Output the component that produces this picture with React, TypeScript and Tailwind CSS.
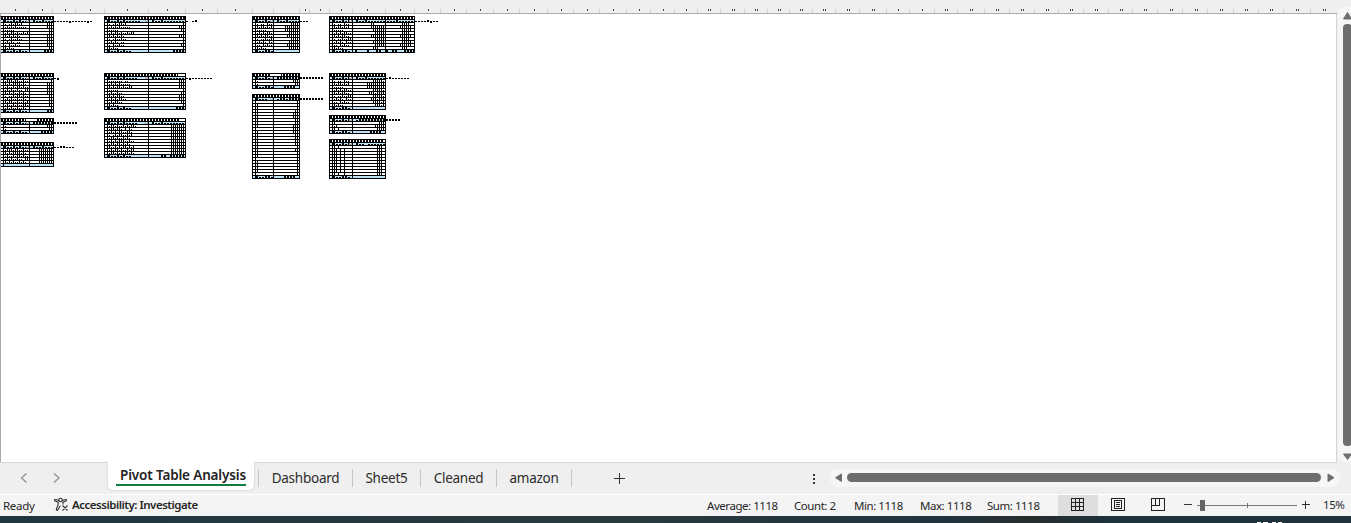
import React from 'react';

/*
 * Marks: "i" tall stroke, "." low dot on a 2px pitch;
 * "I" wide stroke, "_" wide dash, "o" wide stroke below the line on a 3px pitch.
 */
function Marks({ t, className = '' }: { t: string; className?: string }) {
  const wide = /[I_o]/.test(t);
  const pitch = wide ? 3 : 2;
  const w = wide ? 2 : 1;
  const d = t
    .split('')
    .map((c, i) => {
      if (c === ' ') return '';
      const tall = c === 'i' || c === 'I';
      return `M${i * pitch} ${tall ? 0 : 1}h${w}v${tall || c === 'o' ? 2 : 1}h${-w}z`;
    })
    .join('');
  return (
    <svg width={t.length * pitch} height={3} className={`block shrink-0 ${className}`} shapeRendering="crispEdges">
      <path d={d} fill="#000" />
    </svg>
  );
}

type Row = [string, string, string?];
type TableProps = {
  className?: string;
  width: string;
  label: string;
  mid?: string;
  title?: string;
  field?: string;
  value?: string;
  value2?: string;
  total: Row;
  rows: Row[];
  tail?: string;
};

function PivotTable({
  className = '',
  width,
  label,
  mid,
  title = 'w-full',
  field = 'I__I_I____',
  value = 'I__I______________________',
  value2 = '___I_________',
  total,
  rows,
  tail = '',
}: TableProps) {
  const stub = 'w-[3px] shrink-0 border-r border-black';
  const lab = `${label} shrink-0 overflow-hidden border-r border-black`;
  const band = 'flex h-[3px] overflow-hidden border-b border-black bg-[#bde4f6]';
  return (
    <div className={`relative flex shrink-0 flex-col border border-b-0 border-black bg-white ${width} ${className}`}>
      <div className="h-[3px] border-b border-black">
        <div
          className={`h-[2px] bg-[repeating-linear-gradient(90deg,#000_0px,#000_2px,#fff_2px,#fff_3px)] ${title}`}
        />
      </div>
      <div className={band}>
        <div className={stub} />
        <div className={`${lab} relative`}>
          <Marks t={field} />
          <div className="absolute top-0 right-0 h-[2px] w-[3px] bg-[#a6a6a6]">
            <div className="ml-px h-px w-px bg-white" />
          </div>
        </div>
        <div className={`overflow-hidden pl-[3px] ${mid ? `${mid} shrink-0 border-r border-black` : 'flex-1'}`}>
          <Marks t={value} />
        </div>
        {mid && (
          <div className="flex-1 overflow-hidden pl-px">
            <Marks t={value2} />
          </div>
        )}
      </div>
      {rows.map((r, i) => (
        <div key={i} className="flex h-[3px] border-b border-black">
          <div className={stub} />
          <div className={`${lab} pl-px`}>
            <Marks t={r[0]} />
          </div>
          <div className={`flex justify-end ${mid ? `${mid} shrink-0 border-r border-black` : 'flex-1'}`}>
            <Marks t={r[1]} />
          </div>
          {mid && (
            <div className="flex flex-1 justify-end">
              <Marks t={r[2] ?? ''} />
            </div>
          )}
        </div>
      ))}
      <div className={band}>
        <div className={stub} />
        <div className={lab}>
          <Marks t={total[0]} />
        </div>
        <div className={`flex justify-end ${mid ? `${mid} shrink-0 border-r border-black` : 'flex-1'}`}>
          <Marks t={total[1]} />
        </div>
        {mid && (
          <div className="flex flex-1 justify-end">
            <Marks t={total[2] ?? ''} />
          </div>
        )}
      </div>
      {tail && <Marks t={tail} className="absolute top-[3px] left-full ml-px" />}
    </div>
  );
}

const gt = 'I__I_I__';
const names = ['. .i.ii.i', '.i.i.i.....', '.....', '.i.ii.i..i.ii', 'i.i.i.i.', '. .i..i..', '.i.i. ..', '. i..i..', 'i.i..'];
const brands = ['. .. i..', 'i.ii.i.i', '.....', '.i.i.ii..i.', 'i.i.ii.. ', '. ..i..ii', '.i.i. i..', '.. i.i..', 'i.i..'];
const longs = ['.iii.ii..i..i', 'i.i.iiii.i.', '.i..i.ii.i..', '.i.i..i.. ii', 'i.i.i..i.i.', '. ..i.ii.i..', '.i.i..i..i.', 'i.ii..i..i.i', '.i..i.i..ii.', '.i.i..i..i.'];
const zip = (a: string[], b: string[], c: string[] = []): Row[] => a.map((s, i) => [s, b[i] ?? '', c[i] ?? '']);

const seps = [28, 52, 75, 104, 148, 185, 217, 252, 273, 299, 309, 329, 352, 385, 414, 440, 466, 493, 519, 547, 573, 599, 626, 650, 674, 697, 720, 744, 767, 789, 812, 835, 859, 886, 909, 934, 957, 984, 1009, 1034, 1058, 1083, 1108, 1132, 1157, 1182, 1207, 1233, 1258, 1283, 1310];
const ones = [15, 42, 65, 90, 127, 167, 202, 235, 305, 320, 341, 367, 400, 428, 454, 480, 507, 534, 561, 587, 613, 639, 663, 686, 898, 922];
const twos = [708, 732, 755, 778, 800, 823, 847, 872, 945, 970, 996, 1021, 1046, 1070, 1095, 1120, 1144, 1170, 1195, 1220, 1245, 1270, 1296, 1323];

function ColumnRuler() {
  return (
    <div className="h-[14px] w-[1337px] border-b border-[#ababab] bg-[#efefef]">
      <svg width="1337" height="13" className="block" shapeRendering="crispEdges">
        {seps.map((x) => (
          <g key={x}>
            <rect x={x} y="7" width="1" height="3" fill="#e2e2e2" />
            <rect x={x} y="10" width="1" height="3" fill="#cfcfcf" />
          </g>
        ))}
        {ones.map((x) => (
          <rect key={x} x={x} y="9" width="1" height="2" fill="#444" />
        ))}
        {twos.map((x) => (
          <path key={x} d={`M${x} 9h1v2h-1zM${x + 2} 9h1v2h-1z`} fill="#444" />
        ))}
      </svg>
    </div>
  );
}

function Sheet() {
  return (
    <div className="flex h-[449px] w-[1337px] items-start border-r border-b border-[#d6d6d6] bg-white pt-[2px]">
      <div className="-mt-[2px] h-[448px] w-px shrink-0 bg-[#ababab]" />
      <div className="-ml-px flex w-[104px] shrink-0 flex-col">
        <PivotTable width="w-[54px]" className="border-l-[#ababab]" label="w-[26px]" tail="_____o_____o_" total={[gt, 'III']} rows={zip(names, ['iii', 'iii', 'ii', 'ii', 'iii', 'iii', 'iii', 'iii', 'ii'])} />
        <PivotTable width="w-[54px]" className="mt-[20px] border-l-[#ababab]" label="w-[26px]" tail="_o" total={[gt, 'II']} rows={zip(longs, ['i', 'iii', 'iii', 'iii', 'iii', 'ii', 'ii', 'ii', 'ii', 'i'])} />
        <PivotTable width="w-[54px]" className="mt-[5px] border-l-[#ababab]" label="w-[26px]" title="w-full [mask-image:linear-gradient(90deg,#000_25px,transparent_25px,transparent_36px,#000_36px)]" value="IIIIIIIII" tail="IIIIIIII" total={[gt, 'IIII']} rows={zip(['.', '.'], ['iii', 'ii'])} />
        <PivotTable width="w-[54px]" className="mt-[8px] border-l-[#ababab]" label="w-[26px]" tail="__II___" total={['', '']} rows={zip(longs, ['iiiiiii', 'iiiiiii', 'iiiiiii', 'iiiiiii', 'iiiiiii']).slice(0, 5)} />
      </div>
      <div className="flex w-[148px] shrink-0 flex-col">
        <PivotTable width="w-[82px]" label="w-[41px]" field="I__I_I_____" tail="_ _I" total={[gt, 'IIII']} rows={zip(names, ['i', 'iii', 'ii', 'i', 'iii', 'i', 'i', 'ii', 'i'])} />
        <PivotTable width="w-[82px]" className="mt-[20px]" title="w-[73px]" label="w-[41px]" tail="_o_______" total={[gt, 'III']} rows={zip(['....... ..', '.i.i.i.....', 'i.i.ii.i..ii', '.....', '.i..i..', 'i.i.ii..', '.i.i.ii..', '.i.ii..', 'i.i..'], ['iii', 'iii', 'iii', 'i', 'ii', 'iii', 'iii', 'ii', 'i'])} />
        <PivotTable width="w-[82px]" className="mt-[8px]" title="w-[74px]" label="w-[41px]" total={[gt, 'II IIIII']} rows={zip(['.ii.i..i.i.ii.', '.ii.ii. i i.', '.i.i.ii..ii.', '. .i.ii..i.i', '.ii.i..i.i.', '.i.i.iii..i..', '.ii.ii.i.i.', 'i..i.i.ii.i.i', '.i.ii.i..i.ii', '.ii.i.i.ii.i.'], Array(10).fill('iiiiiii'))} />
      </div>
      <div className="flex w-[77px] shrink-0 flex-col">
        <PivotTable width="w-[48px]" label="w-[18px]" tail="___" total={['I__II_', '']} rows={zip(brands, ['iiii', 'iiiiiii', 'iiiiiii', 'iiiii', 'iiiiii', 'iiii', 'iiiii', 'iiiiii', 'iiiii'])} />
        <PivotTable width="w-[48px]" className="mt-[20px]" label="w-[18px]" title="w-full [mask-image:linear-gradient(90deg,#000_18px,transparent_18px,transparent_28px,#000_28px)]" value="IIIIIIII" tail="IIIIIIII" total={['I__II_', 'IIII ']} rows={zip(['.', '.'], ['iii', 'ii'])} />
        <PivotTable width="w-[48px]" className="mt-[5px]" label="w-[18px]" field="I___" value="_II_IIIII" tail="IIIIIIII" total={['I__II_', 'IIII ']} rows={Array.from({ length: 25 }, (_, i): Row => [i === 0 || i === 9 || i === 19 || i === 24 ? '' : 'i', i < 3 ? 'i' : i === 5 || i === 4 || (i > 7 && i < 11) ? 'iii' : i < 15 || i === 16 ? 'ii' : 'i'])} />
      </div>
      <div className="flex shrink-0 flex-col">
        <PivotTable width="w-[86px]" label="w-[20px]" mid="w-[33px]" tail="____Io__" total={['I__II_', 'I   I  II ', 'I II  IIII ']} rows={zip(brands, ['ii     ', 'iiiiiii', 'iiiiii', 'iiiii', 'iiiiiii', 'iiiii', 'iiiiii', 'iiiii', 'iii   '], ['iiii  ', 'iiiiii ', 'iiiii ', 'iiii  ', 'iiiiii ', 'iiii  ', 'iiiii ', 'iiiiii ', 'iii   '])} />
        <PivotTable width="w-[57px]" className="mt-[20px]" label="w-[20px]" tail="_I______" total={['I__II_', '']} rows={zip(brands, ['iiiii.', 'iiiiiiiii', 'iiiiiiiii', 'iiiii.', 'iii.iiii', 'iiiii.', 'iii.iii', 'iiii.i', 'iii.i'])} />
        <PivotTable width="w-[57px]" className="mt-[5px]" label="w-[20px]" value="_IIIIIIIIIII" tail="IIIII" total={['I__II_', 'IIII ']} rows={zip(['i', '.i', 'i i'], ['iii', 'iiiii', 'iiii'])} />
        <PivotTable width="w-[57px]" className="mt-[5px]" title="w-[53px]" label="w-[20px]" value="I__ ______" total={['I__II_', '']} rows={Array.from({ length: 10 }, (_, i): Row => [i === 0 ? 'i i' : i === 9 ? 'i i  i' : 'ii i i', 'iii '])} />
      </div>
    </div>
  );
}

function VerticalScroll() {
  return (
    <div className="flex h-[463px] w-[14px] items-start pt-[7px] pl-px">
      <div className="h-[456px] w-[13px] overflow-hidden rounded-l-[8px] bg-[#f6f6f6]">
        <svg width="13" height="456" className="block">
          <path d="M9.5 5.5 13.5 12h-8z" fill="#6e6e6e" stroke="#6e6e6e" strokeLinejoin="round" />
          <rect x="5" y="17" width="9" height="422" rx="4" fill="#6e6e6e" />
          <path d="M9.5 452.5 13.5 447h-8z" fill="#6e6e6e" stroke="#6e6e6e" strokeLinejoin="round" />
        </svg>
      </div>
    </div>
  );
}

const Divider = () => <div className="mt-[6px] h-[18px] w-px shrink-0 bg-[#c6c6c6]" />;

function TabStrip() {
  const tab = 'shrink-0 text-center text-[13.5px] leading-[30px] tracking-[-0.25px] text-[#2b2b2b] whitespace-nowrap';
  return (
    <div className="flex h-[31px] w-full bg-[#efefef]">
      <div className="h-[31px] w-[108px] shrink-0 rounded-tr-[4px] bg-[#efefef]">
        <svg width="107" height="31" className="block" fill="none" stroke="#929292" strokeWidth="1.3">
          <path d="M26.5 10.5 21.5 15l5 4.5M54 10.5l5 4.5-5 4.5" />
        </svg>
      </div>
      <div className="-mt-[3px] h-[30px] w-[146px] shrink-0 rounded-b-[5px] bg-white pl-[8px] shadow-[0_0_2px_#bbb] [clip-path:inset(2px_-3px_-3px_-3px)]">
        <div className="h-[26px] w-[130px] border-b-2 border-[#107c41] pl-[4px] text-[13.5px] leading-[30px] font-semibold tracking-[-0.15px] whitespace-nowrap text-[#222]">
          Pivot Table Analysis
        </div>
      </div>
      <div className="w-[4px] shrink-0" />
      <Divider />
      <div className={`${tab} w-[93px]`}>Dashboard</div>
      <Divider />
      <div className={`${tab} w-[67px]`}>Sheet5</div>
      <Divider />
      <div className={`${tab} w-[75px]`}>Cleaned</div>
      <Divider />
      <div className={`${tab} w-[74px]`}>amazon</div>
      <Divider />
      <svg width="258" height="31" className="block shrink-0" shapeRendering="crispEdges">
        <path d="M42 15h11v1H42zM47 10h1v11h-1z" fill="#333" />
        <path d="M241 11h2v2h-2zM241 15h2v2h-2zM241 19h2v2h-2z" fill="#333" />
      </svg>
      <div className="mt-[6px] h-[18px] w-[510px] shrink-0 rounded-[8px] bg-[#f6f6f6]">
        <svg width="510" height="18" className="block" fill="#6e6e6e">
          <path d="M11.5 5v7.500L5.500 8.700z" stroke="#6e6e6e" strokeLinejoin="round" />
          <rect x="17" y="4" width="474" height="9" rx="4.500" />
          <path d="M498 5v7.500l6-3.800z" stroke="#6e6e6e" strokeLinejoin="round" />
        </svg>
      </div>
    </div>
  );
}

function StatusBar() {
  const s = 'shrink-0 whitespace-nowrap';
  const stat = `${s} tracking-[-0.45px]`;
  return (
    <div className="flex h-[22px] w-full border-t border-white bg-[#f4f4f4] text-[11.5px] leading-[22px] text-[#262626]">
      <div className={`${s} w-[54px] pl-[3px] tracking-[-0.3px]`}>Ready</div>
      <svg width="18" height="21" className="block shrink-0" fill="none" stroke="#333" strokeWidth="1.1">
        <circle cx="6.500" cy="5" r="1.700" />
        <path d="M5 5.500 1.500 4.500C.4 4.300.2 5.600 1.200 6l2.900 1.200v2.500l-1.700 4.500c-.3 1.200 1 1.600 1.500.6l2.500-4M8 5.500l3.600-1c1.100-.2 1.300 1.100.3 1.500L9 7.200v2.400M8.500 10.500l5 5M13.500 10.500l-5 5" />
      </svg>
      <div className={`${s} w-[635px] leading-[20px] font-semibold tracking-[-0.48px]`}>Accessibility: Investigate</div>
      <div className={`${stat} w-[87px]`}>Average: 1118</div>
      <div className={`${stat} w-[60px]`}>Count: 2</div>
      <div className={`${stat} w-[66px]`}>Min: 1118</div>
      <div className={`${stat} w-[67px]`}>Max: 1118</div>
      <div className={`${stat} w-[71px]`}>Sum: 1118</div>
      <div className="h-[21px] w-[40px] shrink-0 bg-[#dedede]">
        <svg width="40" height="21" className="block" shapeRendering="crispEdges" fill="none" stroke="#222">
          <path d="M13.500 3.500h12v12h-12zM17.500 3v13M21.500 3v13M13 7.500h13M13 11.500h13" />
        </svg>
      </div>
      <svg width="225" height="21" className="block shrink-0" shapeRendering="crispEdges" fill="none" stroke="#222">
        <path d="M13.500 3.500h13v12h-13zM16.500 5.500h7v8h-7zM18 7.500h4M18 9.500h4M18 11.500h4" />
        <path d="M53.500 3.500h13v12h-13zM53 10.500h9M57.500 3v7M61.500 3v8" />
        <path d="M86 9.500h8M204 9.500h8M207.500 6v8" stroke="#333" />
        <path d="M99 10.500h100M149.500 8v5" stroke="#777" />
        <rect x="102" y="5" width="5" height="11" fill="#666" stroke="none" />
      </svg>
      <div className={`${s} tracking-[-0.45px] leading-[20px]`}>15%</div>
    </div>
  );
}

export default function App() {
  return (
    <div className="flex h-[523px] w-[1351px] flex-col overflow-hidden bg-[#efefef] font-['Noto_Sans','Open_Sans',sans-serif]">
      <div className="flex">
        <div>
          <ColumnRuler />
          <Sheet />
        </div>
        <VerticalScroll />
      </div>
      <TabStrip />
      <StatusBar />
      <div className="flex h-[7px] items-end bg-[linear-gradient(90deg,#203640,#293a3d_45%,#20343e_70%,#272d2d_76%,#1d323b_82%,#20333d)]">
        <svg width="1351" height="1" className="block" shapeRendering="crispEdges">
          <path d="M1257 0h4v1h-4zM1263 0h5v1h-5zM1272 0h4v1h-4zM1278 0h4v1h-4z" fill="#fff" />
        </svg>
      </div>
    </div>
  );
}
